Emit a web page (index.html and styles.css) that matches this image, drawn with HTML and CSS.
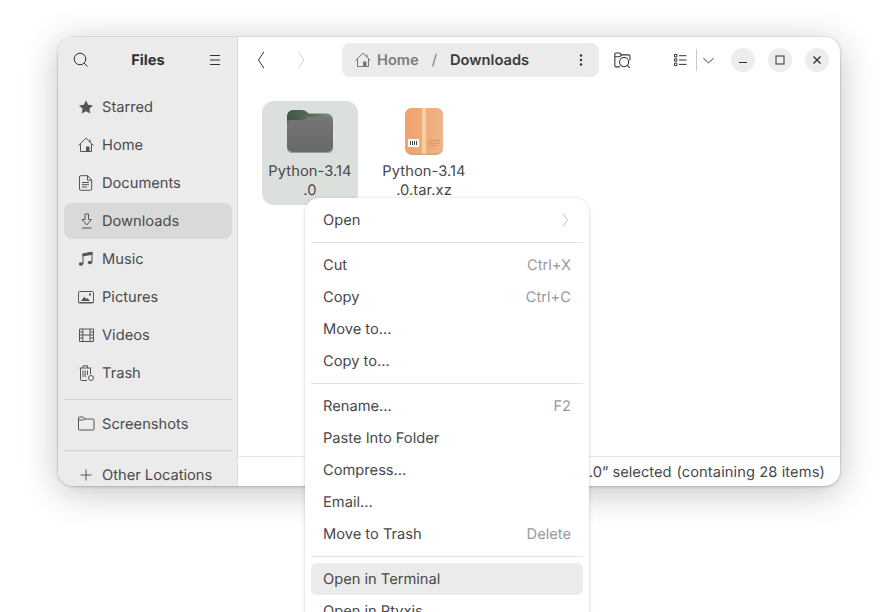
FILE: index.html
```html
<!DOCTYPE html>
<html lang="en">
<head>
<meta charset="utf-8">
<title>Files</title>
<link rel="stylesheet" href="styles.css">
</head>
<body>
<div class="desktop">
  <div class="window">
    <aside class="sidebar">
      <header class="side-head">
        <svg class="ic" viewBox="0 0 16 16"><circle cx="7" cy="7" r="5.800"/><path d="M11.200 11.200l3.300 3.300"/></svg>
        <span class="side-title">Files</span>
        <svg class="ic" viewBox="0 0 16 16"><path d="M3 3.500h10M3 8h10M3 12.500h10"/></svg>
      </header>
      <nav class="side-list">
        <a class="side-row"><svg class="ic fill" viewBox="0 0 16 16"><path d="M8 1.300l2.100 4.500 4.900.6-3.600 3.300 1 4.900L8 12.200l-4.400 2.400 1-4.900L1 6.400l4.900-.6z"/></svg>Starred</a>
        <a class="side-row"><svg class="ic" viewBox="0 0 16 16"><path d="M.5 8.500L8 1.200l7.500 7.300M2.500 7v7.500h11V7M12 2.500v3"/><path class="solid" d="M8 9.500h3.500v5H8z"/></svg>Home</a>
        <a class="side-row"><svg class="ic" viewBox="0 0 16 16"><path d="M2.700.7h7l4 4.300v9a1.300 1.300 0 0 1-1.300 1.300H2.700A1.300 1.300 0 0 1 1.500 14V2A1.300 1.300 0 0 1 2.700.7zM9.500.7v4.500h4.200M4 7.500h7M4 9.700h7M4 12h5"/></svg>Documents</a>
        <a class="side-row active"><svg class="ic" viewBox="0 0 16 16"><path d="M7 1h3.500v5.500h2.800L8.700 12 4.200 6.500H7zM4 15h9.500"/></svg>Downloads</a>
        <a class="side-row"><svg class="ic" viewBox="0 0 16 16"><path d="M5 13V3l9-1.500V11"/><path class="solid" d="M4.500 2.500l10-1.700v3l-10 1.700z"/><ellipse class="solid" cx="3" cy="13" rx="2.200" ry="1.800"/><ellipse class="solid" cx="12" cy="11.500" rx="2.200" ry="1.800"/></svg>Music</a>
        <a class="side-row"><svg class="ic" viewBox="0 0 16 16"><rect x=".5" y="2.500" width="15" height="11.500" rx="1.300"/><path class="solid" d="M3 12l3.300-4.300 2 2.300 1-1 2.700 3zM11 4.500h2v2h-2z"/><path d="M.5 13.500h15"/></svg>Pictures</a>
        <a class="side-row"><svg class="ic" viewBox="0 0 16 16"><path d="M1.500 2h14v12.500h-14zM4.800 2v12.500M12 2v12.500M4.800 8H12M1.500 5h3.300M1.500 8h3.300M1.500 11h3.300M12 5h3.500M12 8h3.500M12 11h3.500"/></svg>Videos</a>
        <a class="side-row"><svg class="ic" viewBox="0 0 16 16"><path d="M1.500 3h11.500M5 3V.8h4.500V3M2.500 3v11.500a1 1 0 0 0 1 1H9M12.500 3v6M5 5.500V12M7.200 5.500V12M9.500 5.500V10"/><circle cx="13" cy="13" r="2.500"/></svg>Trash</a>
        <hr class="side-sep">
        <a class="side-row"><svg class="ic" viewBox="0 0 16 16"><path d="M.5 2a1 1 0 0 1 1-1h3.700l1.800 2h8a1 1 0 0 1 1 1v9a1 1 0 0 1-1 1h-13.500a1 1 0 0 1-1-1z"/><path d="M.5 4H5.200L7 3"/></svg>Screenshots</a>
        <hr class="side-sep">
        <a class="side-row"><svg class="ic" viewBox="0 0 16 16"><path d="M8 2.500v11M2.500 8h11"/></svg>Other Locations</a>
      </nav>
    </aside>
    <main class="main">
      <header class="toolbar">
        <div class="nav-btns">
          <svg class="ic" viewBox="0 0 16 16"><path d="M10.800 0L5.500 8l5.300 8"/></svg>
          <svg class="ic dim" viewBox="0 0 16 16"><path d="M5.500 0l5.300 8-5.300 8"/></svg>
        </div>
        <div class="pathbar">
          <svg class="ic grey" viewBox="0 0 16 16"><path d="M.5 8.500L8 1.200l7.500 7.300M2.500 7v7.500h11V7M12 2.500v3"/><path class="solid" d="M8 9.500h3.500v5H8z"/></svg>
          <span class="crumb">Home</span>
          <span class="slash">/</span>
          <span class="crumb current">Downloads</span>
          <svg class="ic dots fill" viewBox="0 0 16 16"><circle cx="8" cy="3.500" r="1.200"/><circle cx="8" cy="8" r="1.200"/><circle cx="8" cy="12.500" r="1.200"/></svg>
        </div>
        <svg class="ic find" viewBox="0 0 16 16"><path d="M5.500 14H1.800a1 1 0 0 1-1-1V2a1 1 0 0 1 1-1h3.700L7 2.700h7a1 1 0 0 1 1 1V8"/><path d="M.8 4.500h4.700L7 2.700"/><circle cx="9.500" cy="9.500" r="4.300"/><path d="M12.600 12.600l2.400 2.400"/></svg>
        <div class="views">
          <svg class="ic" viewBox="0 0 16 16"><path d="M1.500 2.500h2.400v2.400H1.500zM1.500 6.800h2.400v2.400H1.500zM1.500 11.200h2.400v2.400H1.500zM6 3.700h7.500M6 8h7.500M6 12.400h7.500"/></svg>
          <span class="v-sep"></span>
          <svg class="ic drop" viewBox="0 0 16 16"><path d="M2.500 5.500L8 10.500l5.500-5"/></svg>
        </div>
        <div class="win-btns">
          <button class="win-btn"><svg class="ic" viewBox="0 0 16 16"><path d="M4 10.500h8"/></svg></button>
          <button class="win-btn"><svg class="ic" viewBox="0 0 16 16"><rect x="4" y="4" width="8" height="8"/></svg></button>
          <button class="win-btn"><svg class="ic strong" viewBox="0 0 16 16"><path d="M4.500 4.500l7 7M11.500 4.500l-7 7"/></svg></button>
        </div>
      </header>
      <section class="files">
        <div class="file selected">
          <svg class="file-icon" viewBox="0 0 48 44"><defs><linearGradient id="fb" x1="0" y1="0" x2="0" y2="1"><stop offset="0" stop-color="#747775"/><stop offset="1" stop-color="#666967"/></linearGradient><linearGradient id="bk" x1="0" y1="0" x2="1" y2="0"><stop offset="0" stop-color="#3f5547"/><stop offset=".6" stop-color="#5e6f64"/><stop offset="1" stop-color="#86908a"/></linearGradient></defs><path fill="url(#bk)" d="M1 6a6 6 0 0 1 6-6h9q3 0 5 2l1.500 1.500H41a6 6 0 0 1 6 6V30H1z"/><path fill="url(#fb)" d="M1 13a3 3 0 0 1 3-3h11q4 0 6-2l1-1h21a4 4 0 0 1 4 4v26a5 5 0 0 1-5 5H6a5 5 0 0 1-5-5z"/><path fill="#55585a" d="M1 38v-.5a5 5 0 0 0 5 5h36a5 5 0 0 0 5-5v.5a5 5 0 0 1-5 5H6a5 5 0 0 1-5-5z"/></svg>
          <span class="file-name">Python-3.14<br>.0</span>
        </div>
        <div class="file">
          <svg class="file-icon" viewBox="0 0 48 48"><defs><linearGradient id="bx" x1="0" y1="0" x2="1" y2="0"><stop offset="0" stop-color="#efa26c"/><stop offset="1" stop-color="#eeb48a"/></linearGradient></defs><rect x="5" y="0" width="38" height="47" rx="7" fill="#d9a27a"/><rect x="5" y="0" width="38" height="45.500" rx="7" fill="url(#bx)"/><rect x="22" y="0" width="4" height="45.500" fill="#f5d09f"/><rect x="8" y="31" width="11" height="8" fill="#fff"/><path stroke="#444" stroke-width="1" d="M10.500 33v4M12.500 33v4M14.500 33v4M16.500 33v4"/><path stroke="#d98a52" stroke-width=".8" d="M29 32.500h11M29 35h11M29 37.500h7"/></svg>
          <span class="file-name">Python-3.14<br>.0.tar.xz</span>
        </div>
      </section>
      <footer class="status"><span>“Python-3.14.0” selected</span><span class="status-count">(containing 28 items)</span></footer>
    </main>
  </div>
  <div class="menu">
    <div class="menu-row">Open<svg class="ic chev" viewBox="0 0 16 16"><path d="M5.500 1l5 7-5 7"/></svg></div>
    <hr class="menu-sep">
    <div class="menu-row">Cut<span class="key">Ctrl+X</span></div>
    <div class="menu-row">Copy<span class="key">Ctrl+C</span></div>
    <div class="menu-row">Move to...</div>
    <div class="menu-row">Copy to...</div>
    <hr class="menu-sep">
    <div class="menu-row">Rename...<span class="key">F2</span></div>
    <div class="menu-row">Paste Into Folder</div>
    <div class="menu-row">Compress...</div>
    <div class="menu-row">Email...</div>
    <div class="menu-row">Move to Trash<span class="key">Delete</span></div>
    <hr class="menu-sep">
    <div class="menu-row hover">Open in Terminal</div>
    <div class="menu-row">Open in Ptyxis</div>
  </div>
</div>
</body>
</html>
```
FILE: styles.css
```css
* { box-sizing: border-box; }
html, body { margin: 0; height: 100%; overflow: hidden; background: #fff; }
body { font-family: Inter, "Liberation Sans", sans-serif; font-size: 14.67px; color: #3d3d3f; text-rendering: geometricPrecision; }
.desktop { position: relative; width: 891px; height: 612px; overflow: hidden; }

.ic { width: 16px; height: 16px; flex: none; fill: none; stroke: currentColor; stroke-width: 1; overflow: visible; }
.ic.fill { fill: currentColor; stroke: none; }
.ic .solid { fill: currentColor; stroke: none; }
.ic.strong { stroke-width: 1.4; }

.window {
  position: absolute; left: 58px; top: 37px; width: 782px; height: 449px;
  display: flex; overflow: hidden; background: #fff; border-radius: 15px;
  box-shadow: 0 0 0 1px rgba(0,0,0,.04), 0 1px 3px rgba(0,0,0,.18), 0 6px 36px rgba(0,0,0,.24);
}

.sidebar { width: 180px; flex: none; background: #ebebeb; border-right: 1px solid #dcdcdc; overflow: hidden; }
.side-head { height: 46px; padding: 0 14px 0 15px; display: flex; align-items: center; justify-content: space-between; color: #333; }
.side-title { font-weight: 700; color: #303032; }
.side-list { padding: 6px 5px 0 6px; display: flex; flex-direction: column; gap: 2px; }
.side-row { height: 36px; padding: 0 14px; display: flex; align-items: center; gap: 8px; border-radius: 8px; color: #4a4a4c; flex: none; }
.side-row .ic { color: #555; }
.side-row.active { background: #d9d9d9; }
.side-sep { width: 100%; height: 1px; margin: 6px 0 4px; border: 0; background: #d2d2d2; flex: none; }

.main { flex: 1; min-width: 0; display: flex; flex-direction: column; }
.toolbar { height: 46px; flex: none; padding: 6px 11px 6px 15px; display: flex; align-items: center; color: #333; }
.nav-btns { width: 89px; flex: none; display: flex; gap: 24px; }
.ic.dim { color: #d5d5d5; }
.pathbar { width: 257px; height: 34px; flex: none; padding: 0 10px 0 13px; display: flex; align-items: center; background: #ebebeb; border-radius: 8px; font-weight: 600; }
.ic.grey { color: #777; }
.crumb { color: #7d7d7f; margin-left: 6px; }
.crumb.current { color: #3a3a3c; margin-left: 0; }
.slash { color: #7d7d7f; font-weight: 400; margin: 0 13px 0 13px; }
.dots { margin-left: auto; color: #333; }
.find { margin-left: 15px; width: 17px; height: 17px; }
.views { margin-left: 42px; display: flex; align-items: center; gap: 8px; }
.v-sep { width: 1px; height: 22px; background: #c8c8c8; margin: 0 -1px; }
.drop { width: 15px; height: 15px; margin-left: -3px; }
.win-btns { margin-left: auto; display: flex; gap: 13px; }
.win-btn { width: 24px; height: 24px; padding: 0; border: 0; border-radius: 50%; background: #ededed; color: #333; display: flex; align-items: center; justify-content: center; }

.files { flex: 1; padding: 18px 24px 0; display: flex; gap: 18px; align-items: flex-start; }
.file { width: 96px; height: 104px; padding-top: 7px; display: flex; flex-direction: column; align-items: center; border-radius: 12px; }
.file.selected { background: #dce0dd; }
.file-icon { width: 48px; height: 48px; flex: none; }
.file.selected .file-icon { height: 44px; margin: 2px 0 2px; }
.file-name { margin-top: 6px; line-height: 19px; text-align: center; color: #48484a; letter-spacing: .08px; }

.status { height: 30px; flex: none; padding: 0 15px; border-top: 1px solid #e4e4e4; display: flex; align-items: center; justify-content: flex-end; gap: 5px; color: #48484a; }
.status-count { letter-spacing: .1px; }

.menu {
  position: absolute; left: 305px; top: 198px; width: 284px; padding: 6px;
  background: #fff; border-radius: 14px;
  box-shadow: 0 0 0 1px rgba(0,0,0,.03), 0 1px 5px rgba(0,0,0,.12);
}
.menu-row { height: 32px; padding: 0 12px; display: flex; align-items: center; justify-content: space-between; border-radius: 6px; color: #48484a; }
.menu-row.hover { background: #ebebeb; }
.key { color: #9a9a9c; }
.chev { color: #c4c4c4; margin-right: -2px; }
.menu-sep { height: 1px; margin: 6px 0; border: 0; background: #e2e2e2; }
```
